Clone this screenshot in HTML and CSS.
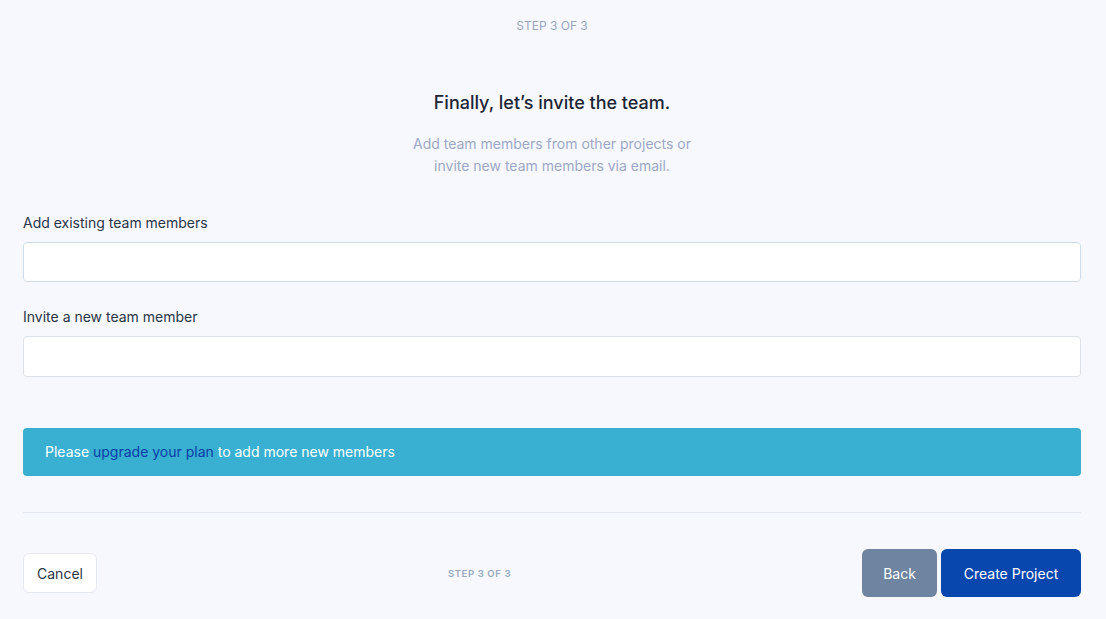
FILE: index.html
```html
<!DOCTYPE html>
<html lang="en">
<head>
    <meta charset="UTF-8">
    <meta name="viewport" content="width=device-width, initial-scale=1.0">
    <title>New Project - Invite Team</title>
    <link rel="stylesheet" href="styles.css">
</head>
<body>
    <div class="wizard">
        <div class="step-top">Step 3 of 3</div>

        <div class="intro">
            <h2 class="title">Finally, let’s invite the team.</h2>
            <p class="subtitle">Add team members from other projects or<br>invite new team members via email.</p>
        </div>

        <div class="field">
            <label class="label" for="existing">Add existing team members</label>
            <input type="text" class="input input-focus" id="existing">
        </div>

        <div class="field">
            <label class="label" for="invite">Invite a new team member</label>
            <input type="text" class="input" id="invite">
        </div>

        <div class="alert">
            Please <a href="#" class="alert-link">upgrade your plan</a> to add more new members
        </div>

        <hr class="divider">

        <div class="footer">
            <button class="btn btn-cancel">Cancel</button>
            <div class="step-bottom">Step 3 of 3</div>
            <div class="actions">
                <button class="btn btn-back">Back</button>
                <button class="btn btn-primary">Create Project</button>
            </div>
        </div>
    </div>
</body>
</html>
```

FILE: styles.css
```css
body {
    margin: 0;
    font-family: "Inter", "Noto Sans", sans-serif;
    background-color: #f6f8fd;
    color: #1e2a3b;
}

.wizard {
    padding: 0 25px 0 23px;
}

.step-top {
    text-align: center;
    font-size: 12px;
    text-transform: uppercase;
    color: #9aa6bf;
    padding-top: 18px;
    height: 16px;
}

.intro {
    text-align: center;
    margin-top: 57px;
}

.title {
    font-size: 18px;
    font-weight: 500;
    margin: 0;
    line-height: 24px;
    color: #1b2536;
}

.subtitle {
    font-size: 14px;
    line-height: 22px;
    color: #9ea8c6;
    margin: 18px 0 0;
}

.intro + .field {
    margin-top: 36px;
}

.label {
    display: block;
    font-size: 14px;
    color: #2a3547;
    line-height: 20px;
    margin-bottom: 9px;
}

.input {
    display: block;
    width: 100%;
    height: 40px;
    box-sizing: border-box;
    border: 1px solid #dde2ea;
    border-radius: 4px;
    background: #fff;
    margin-bottom: 25px;
}

.input-focus {
    border-color: #cfdcea;
}

.field + .field .input {
    height: 41px;
    margin-bottom: 0;
}

.alert {
    margin-top: 51px;
    background-color: #39afd1;
    color: #fff;
    border-radius: 4px;
    font-size: 14px;
    height: 48px;
    line-height: 48px;
    padding: 0 22px;
}

.alert-link {
    color: #0a3ea6;
    text-decoration: none;
}

.divider {
    border: none;
    border-top: 1px solid #e3e9f1;
    margin: 36px 0 0;
}

.footer {
    display: flex;
    justify-content: space-between;
    align-items: center;
    margin-top: 36px;
}

.btn {
    font-family: inherit;
    font-size: 14px;
    border: none;
    cursor: pointer;
}

.btn-cancel {
    width: 74px;
    height: 40px;
    background: #fff;
    border: 1px solid #e4e9f1;
    border-radius: 6px;
    color: #2a3547;
}

.step-bottom {
    font-size: 9.5px;
    font-weight: 600;
    letter-spacing: 0.6px;
    text-transform: uppercase;
    color: #98a8c2;
}

.actions {
    display: flex;
    gap: 4px;
}

.btn-back {
    width: 75px;
    height: 48px;
    background-color: #6e84a1;
    color: #fff;
    border-radius: 6px;
}

.btn-primary {
    width: 140px;
    height: 48px;
    background-color: #0747ae;
    color: #fff;
    border-radius: 6px;
}
```
